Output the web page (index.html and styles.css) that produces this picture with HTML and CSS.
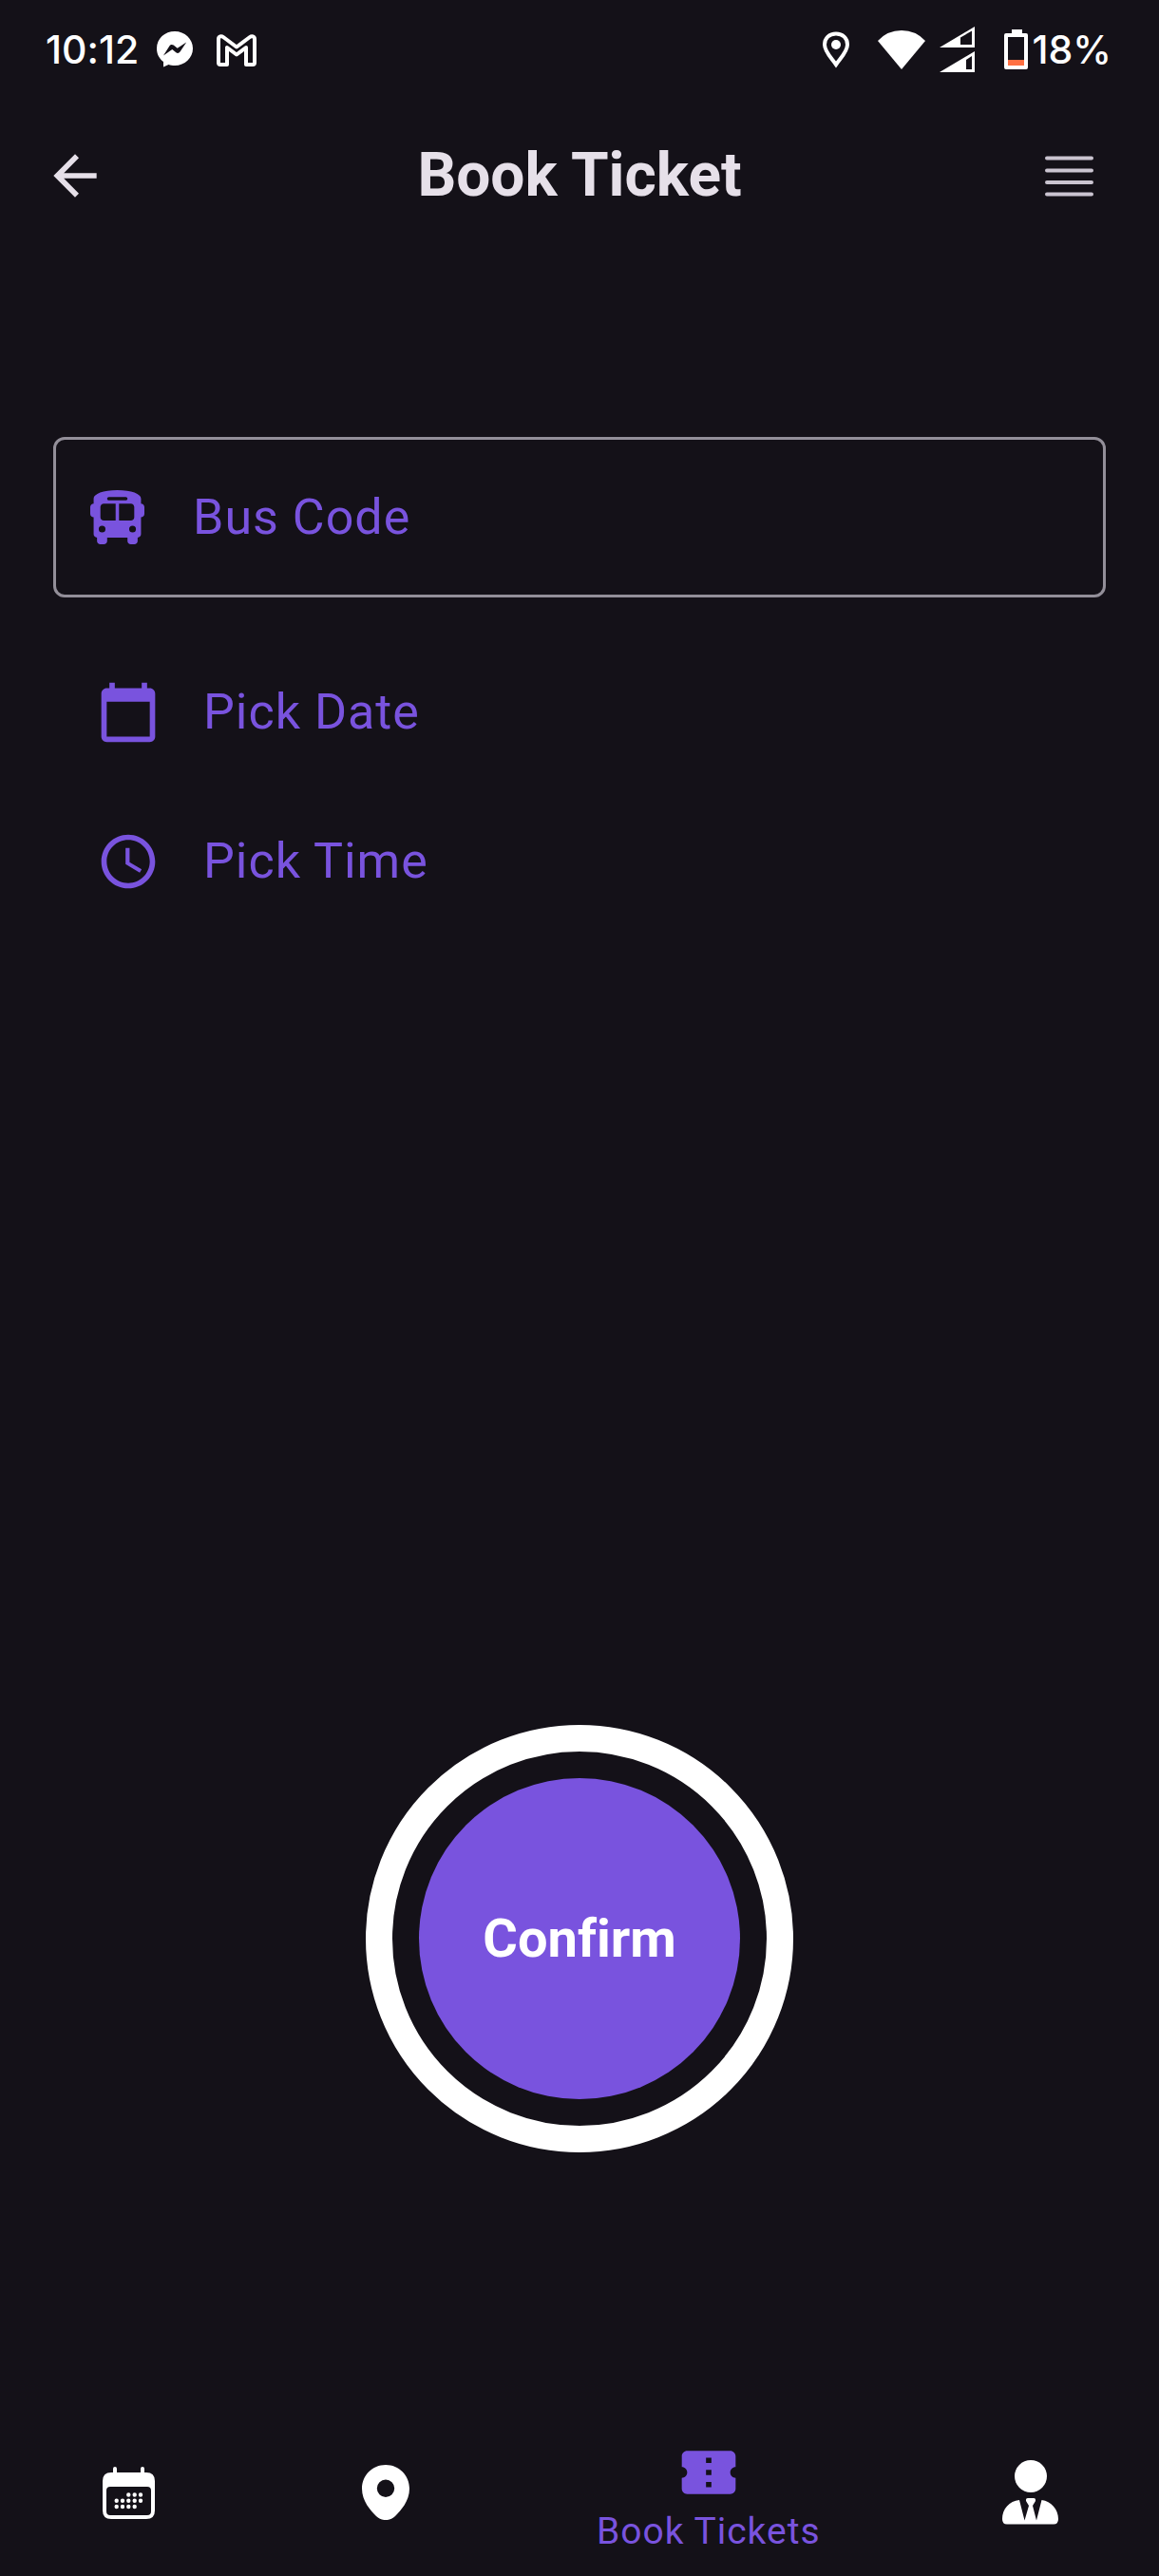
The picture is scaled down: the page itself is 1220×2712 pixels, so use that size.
FILE: index.html
```html
<!DOCTYPE html>
<html lang="en">
<head>
<meta charset="utf-8">
<meta name="viewport" content="width=device-width, initial-scale=1">
<title>Book Ticket</title>
<link rel="stylesheet" href="styles.css">
</head>
<body>
<div class="screen">
  <div class="status">
    <div class="status-left">
      <span>10:12</span>
      <svg width="38" height="40" viewBox="0 0 38 40" aria-hidden="true"><path fill="#fff" d="M19 1C8.500 1 0 8.500 0 19c0 6 2.500 10.500 7 14v5.500l5.500-2.500c2 .7 4 1 6.500 1 10.500 0 19-8 19-18S29.500 1 19 1z"/><path fill="#141118" d="M7 26.500l6.500-10.300c1-1.500 2.800-1.700 4.200-.7l4 3.200 9.500-6.200-6.700 10c-1 1.600-2.800 1.800-4.200.8l-4-3.200z"/></svg>
      <svg width="54" height="40" viewBox="0 0 54 40" aria-hidden="true"><path fill="none" stroke="#fff" stroke-width="4" stroke-linejoin="round" d="M8 34V9c0-3 3-3.500 5-2l14 10.500L41 7c2-1.500 5-1 5 2v25q0 2-2 2h-7V18L27 25.500 17 18v18h-7q-2 0-2-2z"/></svg>
    </div>
    <div class="status-right">
      <svg width="28" height="40" viewBox="0 0 28 40" aria-hidden="true"><path fill="none" stroke="#fff" stroke-width="4" d="M14 3.500C7 3.500 2 8 2 15c0 7.500 7.500 14.500 12 21 4.500-6.500 12-13.500 12-21 0-7-5-11.500-12-11.500z"/><circle cx="14" cy="15" r="5" fill="#fff"/></svg>
      <div class="signals">
        <svg width="50" height="42" viewBox="0 0 50 42" aria-hidden="true"><path fill="#fff" d="M0 12Q10 1 25 1t25 11L25 42z"/></svg>
        <svg width="38" height="48" viewBox="0 0 38 48" aria-hidden="true"><path fill="#fff" fill-rule="evenodd" d="M0 22L37 0v22zM22 11.500V19h12V4.500zM0 48l37-22v22zM28 35v10h6V31z"/></svg>
      </div>
      <div class="battery">
        <svg width="26" height="42" viewBox="0 0 26 42" aria-hidden="true"><path fill="#fff" fill-rule="evenodd" d="M8 0h11v4h4q2 0 2 2v34q0 2-2 2H2q-2 0-2-2V6q0-2 2-2h6zM4 8v30h17V8z"/><path fill="#ff7043" d="M4 32h17v6H4z"/></svg>
        <span>18%</span>
      </div>
    </div>
  </div>

  <header class="appbar">
    <button class="icon-button" type="button" aria-label="Back"><svg class="icon" viewBox="0 0 24 24"><path d="M20 11H7.830l5.590-5.590L12 4l-8 8 8 8 1.410-1.410L7.830 13H20v-2z"/></svg></button>
    <h1>Book Ticket</h1>
    <button class="icon-button menu" type="button" aria-label="Menu"><svg width="68" height="68" viewBox="0 0 68 68"><path stroke="#cac4d0" stroke-width="4" stroke-linecap="round" d="M11 15.500h47M11 28.500h47M11 41h47M11 53.500h47"/></svg></button>
  </header>

  <main>
    <form class="booking">
      <label class="field">
        <svg class="bus" viewBox="0 0 512 512" aria-hidden="true"><path fill-rule="evenodd" d="M256 0C390.400 0 480 35.200 480 80v48c17.700 0 32 14.300 32 32v64c0 17.700-14.300 32-32 32v160c0 17.700-14.300 32-32 32v32c0 17.700-14.300 32-32 32h-32c-17.700 0-32-14.300-32-32v-32H160v32c0 17.700-14.300 32-32 32H96c-17.700 0-32-14.300-32-32v-32c-17.700 0-32-14.300-32-32V256c-17.700 0-32-14.300-32-32v-64c0-17.700 14.300-32 32-32V80C32 35.200 121.600 0 256 0zM96 160v96c0 17.700 14.300 32 32 32h112V128H128c-17.700 0-32 14.300-32 32zM272 288h112c17.700 0 32-14.300 32-32v-96c0-17.700-14.300-32-32-32H272v160zM112 400a32 32 0 1 0 0-64 32 32 0 1 0 0 64zm288 0a32 32 0 1 0 0-64 32 32 0 1 0 0 64zM352 80c0-8.800-7.200-16-16-16H176c-8.800 0-16 7.200-16 16s7.200 16 16 16h160c8.800 0 16-7.200 16-16z"/></svg>
        <input type="text" placeholder="Bus Code" aria-label="Bus Code">
      </label>
      <button class="picker" type="button"><svg class="icon" viewBox="0 0 24 24" aria-hidden="true"><path d="M20 3h-1V1h-2v2H7V1H5v2H4c-1.100 0-2 .9-2 2v16c0 1.100.9 2 2 2h16c1.100 0 2-.9 2-2V5c0-1.100-.9-2-2-2zm0 18H4V8h16v13z"/></svg>Pick Date</button>
      <button class="picker" type="button"><svg class="icon" viewBox="0 0 24 24" aria-hidden="true"><path d="M11.990 2C6.470 2 2 6.480 2 12s4.470 10 9.990 10C17.520 22 22 17.520 22 12S17.520 2 11.990 2zM12 20c-4.420 0-8-3.580-8-8s3.580-8 8-8 8 3.580 8 8-3.580 8-8 8zm.5-13H11v6l5.250 3.150.75-1.230-4.500-2.670z"/></svg>Pick Time</button>
      <div class="ring"><button class="confirm" type="submit">Confirm</button></div>
    </form>
  </main>

  <nav class="tabs" aria-label="Main">
    <a class="tab" href="#schedule" aria-label="Schedule"><svg width="55" height="55" viewBox="0 0 55 55"><path fill-rule="evenodd" d="M11 8V2q0-2 2-2t2 2v4h25V2q0-2 2-2t2 2v4h2q9 0 9 9v31q0 9-9 9H9q-9 0-9-9V15q0-9 9-9h2zM8 21q-4 0-4 4v22q0 4 4 4h39q4 0 4-4V25q0-4-4-4z"/><path fill="none" stroke="#fff" stroke-width="4.400" stroke-linecap="round" d="M27.300 29.500h0M33.700 29.500h0M40 29.500h0M14.700 35.800h0M21 35.800h0M27.300 35.800h0M33.700 35.800h0M40 35.800h0M14.700 42h0M21 42h0M27.300 42h0M33.700 42h0"/></svg></a>
    <a class="tab" href="#map" aria-label="Map"><svg width="50" height="58" viewBox="0 0 50 58"><path fill-rule="evenodd" d="M25 0C39 0 50 11 50 25c0 13-9 23-15 29-6 5.500-14 5.500-20 0C9 48 0 38 0 25 0 11 11 0 25 0zm0 15.500a9.200 9.200 0 1 0 0 18.400 9.200 9.200 0 1 0 0-18.400z"/></svg></a>
    <a class="tab active" href="#tickets" aria-current="page"><svg class="icon" viewBox="0 0 24 24" aria-hidden="true"><path d="M22 10V6c0-1.110-.9-2-2-2H4c-1.100 0-1.990.89-1.990 2v4c1.100 0 1.990.9 1.990 2s-.89 2-2 2v4c0 1.100.9 2 2 2h16c1.100 0 2-.9 2-2v-4c-1.100 0-2-.9-2-2s.9-2 2-2zm-9 7.500h-2v-2h2v2zm0-4.500h-2v-2h2v2zm0-4.500h-2v-2h2v2z"/></svg>Book Tickets</a>
    <a class="tab" href="#profile" aria-label="Profile"><svg width="60" height="68" viewBox="0 0 60 68"><circle cx="30" cy="17" r="17"/><path d="M0 62c0-10.500 7.500-19 18-20l5.500 21.500L28 48l-3-5q-.5-3 2-3h6q2.500 0 2 3l-3 5 4 15.500L41.500 42C51.500 43 59 52 59 62q0 5.500-5 5.500H5q-5 0-5-5.500z"/></svg></a>
  </nav>
</div>
</body>
</html>
```
FILE: styles.css
```css
:root {
  --bg: #141118;
  --accent: #7953de;
  --light: #e6e0e9;
}

* {
  box-sizing: border-box;
}

body {
  margin: 0;
  background: var(--bg);
  color: #fff;
  font-family: Roboto, "Noto Sans", sans-serif;
  font-variant-ligatures: none;
}

button,
input {
  font: inherit;
  font-variant-ligatures: none;
  color: inherit;
  background: none;
  border: 0;
  padding: 0;
}

svg {
  display: block;
  flex: none;
}

.icon {
  width: 68px;
  height: 68px;
  fill: currentColor;
}

.screen {
  min-height: 100vh;
  display: flex;
  flex-direction: column;
}

.status {
  height: 104px;
  padding: 0 50px 0 48px;
  display: flex;
  align-items: center;
  justify-content: space-between;
  font-family: Inter, Roboto, sans-serif;
  font-size: 41px;
  font-weight: 500;
}

.status-left {
  display: flex;
  align-items: center;
  gap: 19px;
}

.status-right {
  display: flex;
  align-items: center;
  gap: 30px;
}

.signals {
  display: flex;
  align-items: center;
  gap: 15px;
}

.battery {
  display: flex;
  align-items: center;
  gap: 3px;
}

.appbar {
  height: 162px;
  padding: 0 45px;
  display: grid;
  grid-template-columns: 1fr auto 1fr;
  align-items: center;
  color: var(--light);
}

.icon-button {
  width: 68px;
  height: 68px;
}

.menu {
  justify-self: end;
  margin-right: 16px;
}

h1 {
  margin: 0;
  font-size: 64px;
  line-height: 76px;
  font-weight: 700;
}

main {
  flex: 1;
  display: flex;
  padding: 194px 56px 0;
}

.booking {
  flex: 1;
  display: flex;
  flex-direction: column;
}

.field {
  height: 169px;
  margin-bottom: 42px;
  padding-left: 36px;
  display: flex;
  align-items: center;
  gap: 51px;
  border: 3px solid #938f99;
  border-radius: 12px;
  color: var(--accent);
  font-size: 52px;
}

.bus {
  width: 57px;
  height: 57px;
  fill: currentColor;
}

.field input {
  flex: 1;
  min-width: 0;
  outline: 0;
  letter-spacing: 1px;
}

.field input::placeholder {
  color: var(--accent);
  opacity: 1;
}

.picker {
  height: 157px;
  padding-left: 45px;
  display: flex;
  align-items: center;
  gap: 45px;
  color: var(--accent);
  font-size: 52px;
  letter-spacing: 1px;
}

.ring {
  width: 450px;
  height: 450px;
  margin: auto auto 246px;
  padding: 28px;
  border: 28px solid #fff;
  border-radius: 50%;
}

.confirm {
  width: 100%;
  height: 100%;
  border-radius: 50%;
  background: var(--accent);
  font-size: 56px;
  font-weight: 700;
}

.tabs {
  height: 200px;
  padding: 24px 85px 0;
  display: flex;
  align-items: center;
  justify-content: space-between;
}

.tab {
  min-width: 100px;
  display: flex;
  flex-direction: column;
  align-items: center;
  color: #fff;
  fill: currentColor;
  font-size: 39px;
  line-height: 56px;
  letter-spacing: 1px;
  text-decoration: none;
}

.active {
  padding-top: 14px;
  color: var(--accent);
}
```
